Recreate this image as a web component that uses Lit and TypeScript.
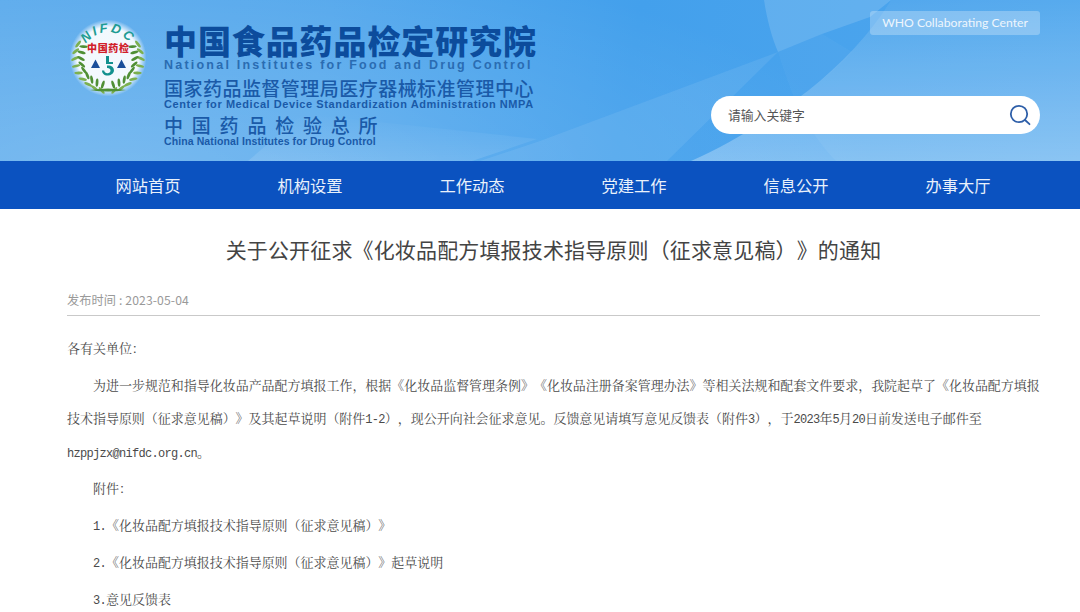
import { LitElement, html, css, svg } from "lit";
import { customElement } from "lit/decorators.js";

const NAV = ["网站首页", "机构设置", "工作动态", "党建工作", "信息公开", "办事大厅"];
const SANS = css`"Noto Sans CJK SC", sans-serif`;

const wreath = (side: number) => {
  const out = [];
  for (let a = 205; a >= 100; a -= 13) {
    const rad = (a * Math.PI) / 180;
    const x = 30 * Math.cos(rad) * -side;
    const y = 30 * Math.sin(rad);
    const tangent = side * (a - 90);
    const ox = 3 * Math.cos(rad) * -side;
    const oy = 3 * Math.sin(rad);
    out.push(svg`
      <ellipse cx="${x + ox}" cy="${y + oy}" rx="1.4" ry="4.2" fill="#7cb04f" transform="rotate(${tangent + side * 28} ${x + ox} ${y + oy})"></ellipse>
      <ellipse cx="${x - ox}" cy="${y - oy}" rx="1.4" ry="4.2" fill="#4f8f35" transform="rotate(${tangent - side * 28} ${x - ox} ${y - oy})"></ellipse>`);
  }
  return out;
};

@customElement("app-root")
export class AppRoot extends LitElement {
  static styles = css`
    :host { display: block; width: 1080px; height: 612px; overflow: hidden; background: #fff; }
    .header { position: relative; height: 161px; overflow: hidden;
      background:
        radial-gradient(ellipse 760px 230px at 120px 175px, rgba(255,255,255,.2), rgba(255,255,255,0)),
        linear-gradient(100deg, #5aaaec 0%, #53a7ec 30%, #43a0ec 58%, #50a7ee 100%); }
    .art { position: absolute; inset: 0; width: 1080px; height: 161px; }
    .inner { position: relative; display: flex; justify-content: space-between; padding: 0 40px 0 71px; height: 161px; }
    .brand { display: flex; gap: 19px; }
    .logo { width: 74px; height: 74px; margin-top: 21px; flex: none; overflow: visible; }
    .titles { display: flex; flex-direction: column; padding-top: 23px; color: #1a5aa8; font-family: ${SANS}; white-space: nowrap; }
    .t1 { font-size: 33px; line-height: 34px; font-weight: 900; letter-spacing: 0.9px; color: #0c4c9c; }
    .t2 { font-family: "Liberation Sans", sans-serif; font-size: 12.5px; line-height: 14px; margin-top: 1px; font-weight: 700; letter-spacing: 2.22px; color: #2a6cb2; }
    .t3 { font-size: 19px; line-height: 22px; margin-top: 5px; letter-spacing: 0.47px; font-weight: 500; }
    .t4 { font-family: "Liberation Sans", sans-serif; font-size: 11px; line-height: 11px; font-weight: 700; letter-spacing: 0.57px; }
    .t5 { font-size: 19px; line-height: 22px; margin-top: 4px; letter-spacing: 8.8px; font-weight: 500; }
    .t6 { font-family: "Liberation Sans", sans-serif; font-size: 10.5px; line-height: 11px; font-weight: 700; letter-spacing: 0.1px; }
    .side { display: flex; flex-direction: column; align-items: flex-end; padding-top: 11px; }
    .who { width: 170px; height: 24px; box-sizing: border-box; border-radius: 3px; background: rgba(255,255,255,.27);
      color: #eef6fd; font: 12.2px/24px "Lato", "Open Sans", sans-serif; text-align: center; }
    .search { margin-top: 61px; width: 329px; height: 38px; box-sizing: border-box; border-radius: 19px; background: #fff;
      display: flex; align-items: center; justify-content: space-between; padding: 0 8px 1px 17px;
      font: 12.8px ${SANS}; color: #555; }
    .search svg { width: 24px; height: 24px; }
    nav { height: 48px; background: #0b52c0; display: grid; grid-template-columns: repeat(6, 162px); padding-left: 67px; }
    nav a { color: #e9f1fb; font: 16.3px/49px ${SANS}; text-align: center; }
    main { padding: 0 40px 0 67px; }
    h1 { margin: 24px 0 0; font: 400 21px/32px ${SANS}; letter-spacing: 0.15px; color: #444; text-align: center; text-spacing-trim: space-all; }
    .paren { font-family: "Noto Sans CJK TC", sans-serif; }
    .meta { margin-top: 25px; padding-bottom: 5px; border-bottom: 1px solid #c9c9c9; font: 12.2px/20px ${SANS}; letter-spacing: 0.1px; color: #999; }
    .body { margin: 13px -4px 0 0; font-family: "Noto Serif CJK SC", serif; font-size: 12.97px; line-height: 37px; color: #4a4a4a; text-spacing-trim: space-all; }
    .body p { margin: 0; }
    .m { font-family: "Liberation Mono", monospace; font-size: 12px; letter-spacing: -0.7px; line-height: 0; }
    .ind { text-indent: 26px; line-height: 33.5px; padding: 1.5px 0 1px; }
    .li { padding-left: 26px; }
  `;

  render() {
    return html`
      <div class="header">
        <svg class="art" viewBox="0 0 1080 161" aria-hidden="true">
          <defs>
            <linearGradient id="up" x1="0" y1="0" x2="0" y2="1">
              <stop offset="0" stop-color="#fff" stop-opacity="0"></stop>
              <stop offset="1" stop-color="#fff" stop-opacity=".3"></stop>
            </linearGradient>
            <linearGradient id="left" x1="0" y1="0" x2="0" y2="1">
              <stop offset="0" stop-color="#fff" stop-opacity="0"></stop>
              <stop offset="1" stop-color="#fff" stop-opacity=".12"></stop>
            </linearGradient>
          </defs>
          <path d="M248 161 L303 114 L537 139 L472 161 Z" fill="url(#left)"></path>
          <path d="M480 161 L540 141 L778 52 L667 161 Z" fill="#fff" opacity=".08"></path>
          <path d="M764 0 C 767 20 772 38 778 52 L822 34 L870 17 L891 0 Z" fill="#fff" opacity=".14"></path>
          <path d="M778 52 C 783 68 789 85 795 100 L809 90 C 825 78 840 65 852 52 L822 34 Z" fill="#fff" opacity=".03"></path>
          <path d="M891 0 C 870 35 840 65 809 90 C 780 112 735 142 691 161 H1080 V0 Z" fill="url(#up)"></path>
          <path d="M795 100 C 805 122 820 145 836 161 H1080 V0 H891 C 870 35 840 65 809 90 Z" fill="#fff" opacity=".05"></path>
        </svg>
        <div class="inner">
          <div class="brand">
            <svg class="logo" viewBox="-37 -37 74 74" aria-hidden="true">
              <defs>
                <radialGradient id="glow">
                  <stop offset=".8" stop-color="#fff" stop-opacity=".92"></stop>
                  <stop offset="1" stop-color="#fff" stop-opacity="0"></stop>
                </radialGradient>
              </defs>
              <circle r="38.5" fill="url(#glow)"></circle>
              <path id="arc" d="M-26 -6 A 27 27 0 0 1 26 -6" fill="none"></path>
              <text font-family="Liberation Sans" font-size="13" font-weight="700" font-style="italic" fill="#1f9c93" letter-spacing="2.4" text-anchor="middle"><textPath href="#arc" startOffset="50%">NIFDC</textPath></text>
              <g>${wreath(-1)}${wreath(1)}</g>
              <path d="M-18 32 Q0 29 18 32 Q0 35 -18 32Z" fill="#4f8f35"></path>
              <text x="0" y="-6.5" text-anchor="middle" font-family="Noto Sans CJK SC" font-size="10" font-weight="900" fill="#d1202a" textLength="42">中国药检</text>
              <path d="M-17 10 L-12.5 1.5 L-8 10Z M9 10 L13.5 1.5 L18 10Z" fill="#1a4f9a"></path>
              <path d="M-2 -2 L1 -2 L1 4 L5 4 L5 6 L-2 6 Z" fill="#12908e"></path>
              <path d="M-1 7.5 C7 6.5 9 16 0.5 17.5 C-3.5 18 -6 15.5 -6 12.5 L-3.8 12.5 C-3.6 14.5 -1.8 15.5 0 15.2 C3.6 14.6 3.5 9.8 -1 10Z" fill="#12908e"></path>
            </svg>
            <div class="titles">
              <div class="t1">中国食品药品检定研究院</div>
              <div class="t2">National Institutes for Food and Drug Control</div>
              <div class="t3">国家药品监督管理局医疗器械标准管理中心</div>
              <div class="t4">Center for Medical Device Standardization Administration NMPA</div>
              <div class="t5">中国药品检验总所</div>
              <div class="t6">China National Institutes for Drug Control</div>
            </div>
          </div>
          <div class="side">
            <div class="who">WHO Collaborating Center</div>
            <div class="search">
              <span>请输入关键字</span>
              <svg viewBox="0 0 24 24" fill="none" stroke="#2d5ea8" stroke-width="1.8" stroke-linecap="round"><circle cx="11" cy="11" r="8.2"></circle><path d="M17 17l4.5 4.2"></path></svg>
            </div>
          </div>
        </div>
      </div>
      <nav>${NAV.map((n) => html`<a>${n}</a>`)}</nav>
      <main>
        <h1>关于公开征求《化妆品配方填报技术指导原则<span class="paren">（</span>征求意见稿<span class="paren">）</span>》的通知</h1>
        <div class="meta">发布时间 : 2023-05-04</div>
        <div class="body">
          <p>各有关单位：</p>
          <p class="ind">为进一步规范和指导化妆品产品配方填报工作，根据《化妆品监督管理条例》《化妆品注册备案管理办法》等相关法规和配套文件要求，我院起草了《化妆品配方填报技术指导原则（征求意见稿）》及其起草说明（附件<span class="m">1-2</span>），现公开向社会征求意见。反馈意见请填写意见反馈表（附件<span class="m">3</span>），于<span class="m">2023</span>年<span class="m">5</span>月<span class="m">20</span>日前发送电子邮件至<span class="m">hzppjzx@nifdc.org.cn</span>。</p>
          <p class="li">附件：</p>
          <p class="li"><span class="m">1.</span>《化妆品配方填报技术指导原则（征求意见稿）》</p>
          <p class="li"><span class="m">2.</span>《化妆品配方填报技术指导原则（征求意见稿）》起草说明</p>
          <p class="li"><span class="m">3.</span>意见反馈表</p>
        </div>
      </main>
    `;
  }
}
